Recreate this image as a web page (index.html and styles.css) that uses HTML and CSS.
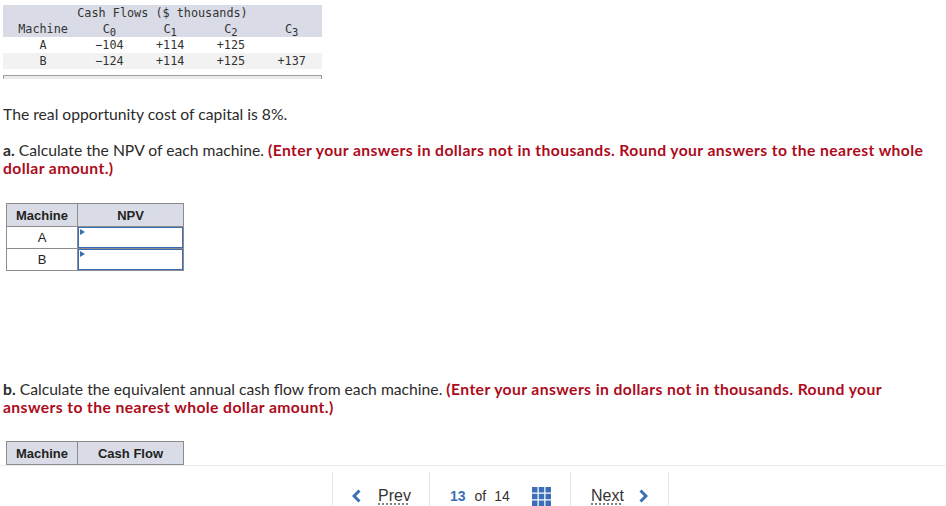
FILE: index.html
```html
<!DOCTYPE html>
<html lang="en">
<head>
<meta charset="utf-8">
<title>NPV question</title>
<link rel="stylesheet" href="styles.css">
</head>
<body>
<div class="page">
  <table class="cf">
    <tr class="cf-head"><th colspan="5" class="cf-title">Cash Flows ($ thousands)</th></tr>
    <tr class="cf-head">
      <th class="c-m">Machine</th>
      <th>C<sub>0</sub></th>
      <th>C<sub>1</sub></th>
      <th>C<sub>2</sub></th>
      <th>C<sub>3</sub></th>
    </tr>
    <tr><td class="c-m">A</td><td>−104</td><td>+114</td><td>+125</td><td></td></tr>
    <tr class="alt"><td class="c-m">B</td><td>−124</td><td>+114</td><td>+125</td><td>+137</td></tr>
  </table>
  <div class="cf-bar"></div>

  <p class="txt first">The real opportunity cost of capital is 8%.</p>
  <p class="txt"><b>a.</b> Calculate the NPV of each machine. <span class="red">(Enter your answers in dollars not in thousands. Round your answers to the nearest whole dollar amount.)</span></p>

  <table class="ans">
    <tr><th class="a-m">Machine</th><th class="a-v">NPV</th></tr>
    <tr><td>A</td><td class="in-cell"><div class="inp"><span class="tri"></span></div></td></tr>
    <tr><td>B</td><td class="in-cell"><div class="inp"><span class="tri"></span></div></td></tr>
  </table>

  <p class="txt partb"><b>b.</b> Calculate the equivalent annual cash flow from each machine. <span class="red">(Enter your answers in dollars not in thousands. Round your answers to the nearest whole dollar amount.)</span></p>

  <table class="ans ans-b">
    <tr><th class="a-m">Machine</th><th class="a-v">Cash Flow</th></tr>
    <tr><td>A</td><td class="in-cell"><div class="inp"><span class="tri"></span></div></td></tr>
    <tr><td>B</td><td class="in-cell"><div class="inp"><span class="tri"></span></div></td></tr>
  </table>
</div>

<footer class="nav">
  <div class="seg seg-prev">
    <svg class="chev" width="9" height="14" viewBox="0 0 9 14"><polyline points="7.5,1.5 2,7 7.5,12.5" fill="none" stroke="#3a6fb7" stroke-width="3"/></svg>
    <span class="lnk">Prev</span>
  </div>
  <div class="seg seg-page">
    <span class="cur">13</span><span class="of">of</span><span class="tot">14</span>
    <svg class="grid" width="19" height="19" viewBox="0 0 19 19" fill="#3a6fb7">
      <rect x="0" y="0" width="5.5" height="5.5"/><rect x="6.75" y="0" width="5.5" height="5.5"/><rect x="13.5" y="0" width="5.5" height="5.5"/>
      <rect x="0" y="6.75" width="5.5" height="5.5"/><rect x="6.75" y="6.75" width="5.5" height="5.5"/><rect x="13.5" y="6.75" width="5.5" height="5.5"/>
      <rect x="0" y="13.5" width="5.5" height="5.5"/><rect x="6.75" y="13.5" width="5.5" height="5.5"/><rect x="13.5" y="13.5" width="5.5" height="5.5"/>
    </svg>
  </div>
  <div class="seg seg-next">
    <span class="lnk">Next</span>
    <svg class="chev" width="9" height="14" viewBox="0 0 9 14"><polyline points="1.5,1.5 7,7 1.5,12.5" fill="none" stroke="#3a6fb7" stroke-width="3"/></svg>
  </div>
  <div class="seg seg-end"></div>
</footer>
</body>
</html>
```
FILE: styles.css
```css
html, body {
  margin: 0;
  padding: 0;
  background: #fff;
}
body {
  font-family: "Lato", "Liberation Sans", sans-serif;
  color: #2b2b2b;
}
.page {
  padding: 5px 10px 0 3px;
}

/* cash flow table */
.cf {
  border-collapse: collapse;
  font-family: "DejaVu Sans Mono", "Liberation Mono", monospace;
  font-size: 11.8px;
  color: #333;
  width: 319px;
}
.cf th, .cf td {
  font-weight: normal;
  text-align: center;
  padding: 0;
  height: 16px;
  line-height: 16px;
  width: 62px;
}
.cf .c-m {
  width: 73px;
  padding-left: 4px;
}
.cf-head th {
  background: #d9dce6;
}
.cf sub {
  font-size: 10.5px;
  vertical-align: -3px;
  line-height: 0;
}
.cf tr.alt td {
  background: #f2f2f2;
}
.cf-bar {
  width: 317px;
  height: 3px;
  margin-top: 6px;
  border: 1px solid #a0a0a0;
  border-bottom: none;
  background: #ececec;
}

/* text */
.txt {
  margin: 18px 0 0 0;
  font-size: 15.7px;
  line-height: 18px;
}
.txt.first {
  margin-top: 26px;
}
.txt b {
  font-weight: bold;
}
.red {
  color: #ad0b1c;
  font-weight: bold;
  letter-spacing: 0.4px;
}
.txt.partb {
  margin-top: 109px;
}

/* answer tables */
.ans {
  border-collapse: collapse;
  margin: 26px 0 0 3px;
  font-family: "Liberation Sans", Arial, sans-serif;
  font-size: 13px;
  color: #222;
}
.ans th, .ans td {
  border: 1px solid #8c8c8c;
  text-align: center;
  padding: 0;
}
.ans th {
  background: #d9dce6;
  height: 22px;
  font-weight: bold;
}
.ans td {
  height: 21px;
}
.a-m { width: 70px; }
.a-v { width: 105px; }
.ans-b {
  margin-top: 25px;
}
.in-cell {
  position: relative;
}
.inp {
  position: relative;
  box-sizing: border-box;
  height: 21px;
  width: 105px;
  border: 1px solid #3b6db3;
  background: #fff;
}
.tri {
  position: absolute;
  left: 1px;
  top: 1px;
  width: 0;
  height: 0;
  border-top: 3px solid transparent;
  border-bottom: 3px solid transparent;
  border-left: 5px solid #3b6db3;
}

/* footer nav */
.nav {
  position: fixed;
  left: 0;
  right: 0;
  bottom: 0;
  height: 40px;
  overflow: hidden;
  background: #fff;
  border-top: 1px solid #ebebeb;
  display: flex;
  padding-left: 332px;
  font-family: "Liberation Sans", Arial, sans-serif;
  font-size: 16px;
  color: #333;
}
.seg {
  display: flex;
  align-items: center;
  box-sizing: border-box;
  height: 48px;
  margin-top: 6px;
  border-left: 1px solid #e6e6e6;
}
.seg-prev {
  width: 97px;
  padding-left: 19px;
}
.seg-prev .lnk { margin-left: 17px; }
.seg-page {
  width: 141px;
  padding-left: 20px;
  font-size: 14px;
}
.seg-next {
  width: 98px;
  padding-left: 20px;
}
.seg-next .lnk { margin-right: 15px; }
.seg-end {
  width: 1px;
}
.lnk {
  text-decoration: underline dotted #555;
  text-underline-offset: 3px;
}
.cur {
  color: #3a6fb7;
  font-weight: bold;
}
.of {
  margin-left: 9px;
}
.tot {
  margin-left: 8px;
}
.grid {
  margin-left: 22px;
}
```
